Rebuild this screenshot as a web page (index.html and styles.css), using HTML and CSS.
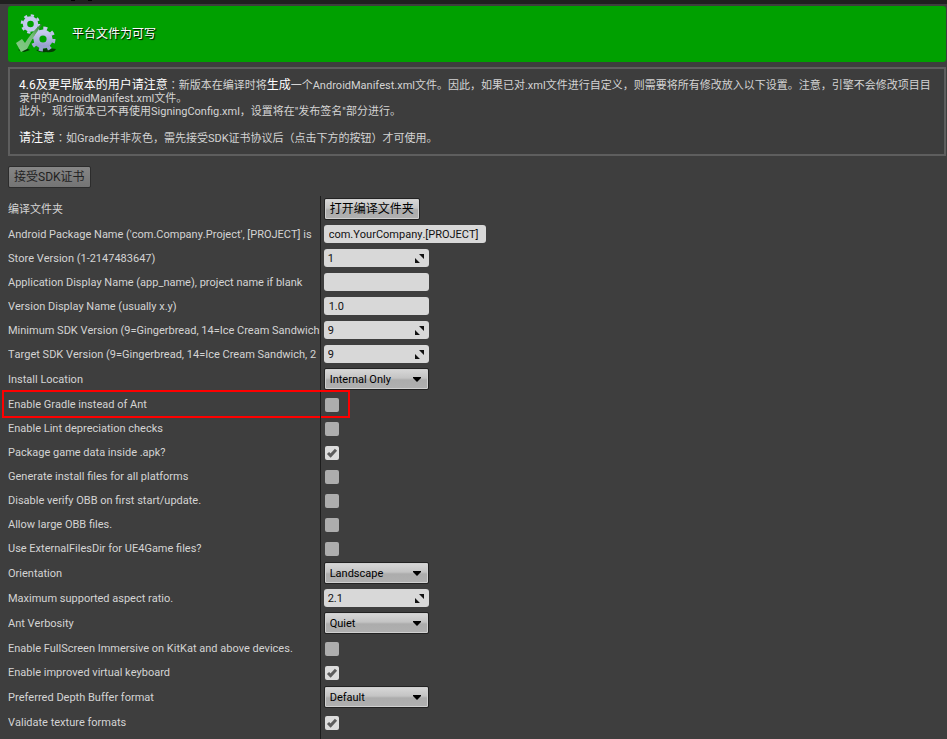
FILE: index.html
```html
<!DOCTYPE html>
<html lang="zh-CN">
<head>
<meta charset="utf-8">
<title>Android</title>
<link rel="stylesheet" href="styles.css">
</head>
<body>
<svg width="0" height="0" class="defs" aria-hidden="true">
  <symbol id="spin" viewBox="0 0 9 9"><path d="M4 0H9V5Z M0 4L5 9H0Z" fill="#111"/></symbol>
  <symbol id="arrow" viewBox="0 0 8 5"><path d="M0 0H8V1L4 5L0 1Z" fill="#000"/></symbol>
</svg>
<div class="strip"><svg width="24" height="1" viewBox="0 0 24 1"><path d="M0 0H4V1H0Z M17 0H21V1H17Z" fill="#000"/></svg></div>
<main class="page">
  <div class="banner">
    <svg class="gears" width="40" height="40" viewBox="0 0 40 40" aria-hidden="true">
      <defs>
        <linearGradient id="g" x1="0" y1="0" x2="0" y2="1"><stop offset="0" stop-color="#c6cbee"/><stop offset="1" stop-color="#98a0ce"/></linearGradient>
        <linearGradient id="t" x1="0" y1="1" x2="1" y2="0"><stop offset="0" stop-color="#84cc84"/><stop offset=".6" stop-color="#74bc78"/><stop offset="1" stop-color="#2a7a2a"/></linearGradient>
      </defs>
      <path d="M2 36Q8 32 14 36L8 38Z M20 36Q30 33 40 35Q38 39 30 38Q24 39 20 36Z" fill="#043c04"/>
      <g fill="none">
        <circle cx="14.5" cy="10" r="5.5" stroke="#c3c9ee" stroke-width="4.4"/>
        <circle cx="14.5" cy="10" r="8.6" stroke="#c3c9ee" stroke-width="2.4" stroke-dasharray="3.2 3.55"/>
        <circle cx="27" cy="25" r="6.6" stroke="url(#g)" stroke-width="6"/>
        <circle cx="27" cy="25" r="10.8" stroke="url(#g)" stroke-width="3.4" stroke-dasharray="4 4.48"/>
      </g>
      <path d="M0 29L6 25L9 29Q15 19 25 10L26 11Q18 21 11 35L5 38Z" fill="url(#t)"/>
    </svg>
    <span>平台文件为可写</span>
  </div>
  <section class="notice">
    <p><strong>4.6及更早版本的用户请注意</strong><span lang="zh-TW">：</span>新版本在编译时将<strong>生成</strong>一个AndroidManifest.xml文件。因此，如果已对.xml文件进行自定义，则需要将所有修改放入以下设置。注意，引擎不会修改项目目录中的AndroidManifest.xml文件。</p>
    <p>此外，现行版本已不再使用SigningConfig.xml，设置将在"发布签名"部分进行。</p>
    <p class="gap"><strong>请注意</strong><span lang="zh-TW">：</span>如Gradle并非灰色，需先接受SDK证书协议后（点击下方的按钮）才可使用。</p>
  </section>
  <button class="accept" type="button" disabled>接受SDK证书</button>
  <form class="settings">
    <div class="row tall"><span class="label">编译文件夹</span><div class="cell"><button type="button" class="open">打开编译文件夹</button></div></div>
    <div class="row"><label class="label" for="pkg">Android Package Name ('com.Company.Project', [PROJECT] is</label><div class="cell"><input class="text wide" id="pkg" type="text" value="com.YourCompany.[PROJECT]"></div></div>
    <div class="row"><label class="label" for="store">Store Version (1-2147483647)</label><div class="cell"><div class="field"><input class="text num" id="store" type="text" value="1"><svg class="spin"><use href="#spin"/></svg></div></div></div>
    <div class="row"><label class="label" for="app">Application Display Name (app_name), project name if blank</label><div class="cell"><input class="text" id="app" type="text"></div></div>
    <div class="row"><label class="label" for="ver">Version Display Name (usually x.y)</label><div class="cell"><input class="text" id="ver" type="text" value="1.0"></div></div>
    <div class="row"><label class="label" for="min">Minimum SDK Version (9=Gingerbread, 14=Ice Cream Sandwich</label><div class="cell"><div class="field"><input class="text num" id="min" type="text" value="9"><svg class="spin"><use href="#spin"/></svg></div></div></div>
    <div class="row"><label class="label" for="target">Target SDK Version (9=Gingerbread, 14=Ice Cream Sandwich, 2</label><div class="cell"><div class="field"><input class="text num" id="target" type="text" value="9"><svg class="spin"><use href="#spin"/></svg></div></div></div>
    <div class="row tall"><label class="label" for="loc">Install Location</label><div class="cell"><div class="field"><select id="loc"><option>Internal Only</option></select><svg class="arrow"><use href="#arrow"/></svg></div></div></div>
    <div class="row marked"><label class="label" for="c1">Enable Gradle instead of Ant</label><div class="cell"><span class="check"><input type="checkbox" id="c1"></span></div></div>
    <div class="row"><label class="label" for="c2">Enable Lint depreciation checks</label><div class="cell"><span class="check"><input type="checkbox" id="c2"></span></div></div>
    <div class="row"><label class="label" for="c3">Package game data inside .apk?</label><div class="cell"><span class="check"><input type="checkbox" id="c3" checked><svg viewBox="0 0 14 14"><path d="M3 7L5.6 9.6L11 3.8"/></svg></span></div></div>
    <div class="row"><label class="label" for="c4">Generate install files for all platforms</label><div class="cell"><span class="check"><input type="checkbox" id="c4"></span></div></div>
    <div class="row"><label class="label" for="c5">Disable verify OBB on first start/update.</label><div class="cell"><span class="check"><input type="checkbox" id="c5"></span></div></div>
    <div class="row"><label class="label" for="c6">Allow large OBB files.</label><div class="cell"><span class="check"><input type="checkbox" id="c6"></span></div></div>
    <div class="row"><label class="label" for="c7">Use ExternalFilesDir for UE4Game files?</label><div class="cell"><span class="check"><input type="checkbox" id="c7"></span></div></div>
    <div class="row tall"><label class="label" for="ori">Orientation</label><div class="cell"><div class="field"><select id="ori"><option>Landscape</option></select><svg class="arrow"><use href="#arrow"/></svg></div></div></div>
    <div class="row"><label class="label" for="asp">Maximum supported aspect ratio.</label><div class="cell"><div class="field"><input class="text num" id="asp" type="text" value="2.1"><svg class="spin"><use href="#spin"/></svg></div></div></div>
    <div class="row tall"><label class="label" for="ant">Ant Verbosity</label><div class="cell"><div class="field"><select id="ant"><option>Quiet</option></select><svg class="arrow"><use href="#arrow"/></svg></div></div></div>
    <div class="row"><label class="label" for="c8">Enable FullScreen Immersive on KitKat and above devices.</label><div class="cell"><span class="check"><input type="checkbox" id="c8"></span></div></div>
    <div class="row"><label class="label" for="c9">Enable improved virtual keyboard</label><div class="cell"><span class="check"><input type="checkbox" id="c9" checked><svg viewBox="0 0 14 14"><path d="M3 7L5.6 9.6L11 3.8"/></svg></span></div></div>
    <div class="row tall"><label class="label" for="depth">Preferred Depth Buffer format</label><div class="cell"><div class="field"><select id="depth"><option>Default</option></select><svg class="arrow"><use href="#arrow"/></svg></div></div></div>
    <div class="row"><label class="label" for="c10">Validate texture formats</label><div class="cell"><span class="check"><input type="checkbox" id="c10" checked><svg viewBox="0 0 14 14"><path d="M3 7L5.6 9.6L11 3.8"/></svg></span></div></div>
    <div class="row"><span class="label"></span></div>
  </form>
</main>
</body>
</html>
```

FILE: styles.css
```css
*, *::after { box-sizing: border-box; }
html { overflow: hidden; }
body {
  margin: 0;
  background: #3e3e3e;
  color: #d4d4d4;
  font: 11px/13px Roboto, "Noto Sans CJK SC", sans-serif;
  font-kerning: none;
}
button, input, select { font: inherit; font-kerning: none; margin: 0; }
.defs { position: absolute; }
.strip { height: 4px; background: #202020; padding-left: 71px; }
.strip svg { display: block; }
.page { padding: 2px 1px 0 8px; }
.banner {
  display: flex;
  align-items: center;
  gap: 16px;
  height: 56px;
  padding: 0 8px;
  border-radius: 3px;
  background: #00a000;
  color: #fff;
  font-size: 12px;
  text-shadow: 1px 1px 1px #000;
}
.notice {
  margin-top: 5px;
  padding: 10px 8px 9px 9px;
  border: 2px solid #5e5e5e;
  background: #3d3d3d;
}
.notice p { margin: 0; }
.notice .gap { margin-top: 14px; }
.notice strong { font-size: 12px; font-weight: 400; line-height: 0; color: #fff; }
[lang="zh-TW"] { font-family: "Noto Sans CJK TC", sans-serif; line-height: 0; }
.accept {
  display: block;
  height: 22px;
  margin: 10px 0 8px;
  padding: 0 5px;
  border: 1px solid #2c2c2c;
  border-radius: 2px;
  background: linear-gradient(#868686, #747474);
  color: #222;
  font-size: 12px;
}
.row {
  position: relative;
  display: grid;
  grid-template-columns: 1fr 2fr;
  height: 24px;
}
.tall { height: 26px; }
.label {
  overflow: hidden;
  white-space: nowrap;
  border-right: 1px solid #1c1c1c;
  display: flex;
  align-items: center;
}
.cell { display: flex; align-items: center; min-width: 0; padding-left: 3px; }
.marked::after {
  content: "";
  position: absolute;
  left: -6px;
  top: -2px;
  width: 348px;
  height: 28px;
  border: 2px solid #f00;
  pointer-events: none;
}
.field { position: relative; display: flex; }
.text {
  width: 105px;
  height: 18px;
  padding: 0 5px;
  border: 0;
  border-radius: 3px;
  background: #d8d8d8;
  color: #111;
}
.num { padding-left: 4px; }
.wide { width: 162px; }
.spin { position: absolute; right: 5px; top: 5px; width: 9px; height: 9px; }
.open, select {
  height: 22px;
  border: 1px solid #222;
  border-radius: 2px;
  background: linear-gradient(#d8d8d8, #c4c4c4 45%, #acacac 55%, #b0b0b0);
  box-shadow: inset 0 0 0 1px #d0d0d0;
  color: #000;
}
.open { padding: 0 5px; font-size: 12px; }
select { appearance: none; width: 105px; padding: 0 5px; }
.arrow { position: absolute; right: 8px; top: 9px; width: 8px; height: 5px; }
.check { position: relative; display: block; width: 14px; height: 14px; margin: 2px 0 0 1px; }
.check input {
  appearance: none;
  display: block;
  width: 14px;
  height: 14px;
  border-radius: 2px;
  background: #adadad;
}
.check input:checked { background: #dcdcdc; }
.check svg { position: absolute; inset: 0; pointer-events: none; }
.check path { fill: none; stroke: #5c5c5c; stroke-width: 3; }
```
